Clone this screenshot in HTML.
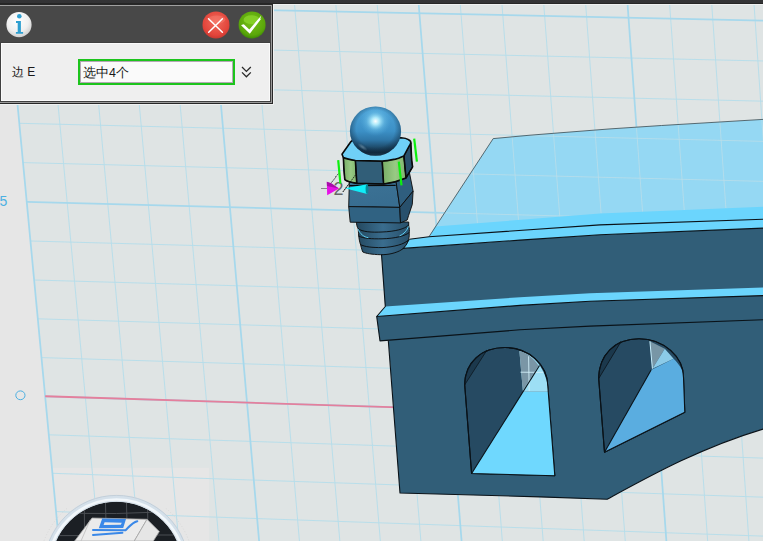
<!DOCTYPE html>
<html><head><meta charset="utf-8">
<style>
html,body{margin:0;padding:0;}
body{width:763px;height:541px;overflow:hidden;position:relative;background:#e6e6e6;font-family:"Liberation Sans",sans-serif;}
#scene{position:absolute;left:0;top:0;}
#topbar{position:absolute;left:0;top:0;width:763px;height:4px;background:linear-gradient(#343436 0,#333335 75%,#262626 75%,#262626 100%);}
#dlg{position:absolute;left:0;top:4px;width:273px;height:100px;background:#282828;}
#dlg .tl{position:absolute;left:0;top:1px;width:272px;height:1px;background:#a0a0a0;}
#dlg .vr{position:absolute;left:271px;top:1px;width:1px;height:98px;background:#9a9a9a;}
#dlg .hdr{position:absolute;left:0;top:2px;width:271px;height:36px;background:#484848;border-bottom:1px solid #404040;}
#dlg .f1{position:absolute;left:0;top:39px;width:272px;height:60px;background:#9a9a9a;}
#dlg .f2{position:absolute;left:0;top:39px;width:271px;height:59px;background:#404040;}
#dlg .f3{position:absolute;left:1px;top:39px;width:269px;height:58px;background:#fafafa;}
#dlg .pan{position:absolute;left:2px;top:40px;width:267px;height:56px;background:#efefef;}
.hl{position:absolute;background:#eff1f1;}
.lbl{position:absolute;font-size:12px;color:#1a1a1a;white-space:nowrap;}
#inp{position:absolute;left:78px;top:55px;width:153px;height:22px;border:2px solid #1cc41c;background:#fafafa;box-shadow:inset 0 0 0 1px #b4a8b4;}
</style></head><body>
<svg id="scene" width="763" height="541" viewBox="0 0 763 541">
<defs>
 <linearGradient id="sph" x1="0" x2="0" y1="0" y2="1">
  <stop offset="0" stop-color="#4ea4d8"/><stop offset="0.5" stop-color="#3c90c6"/><stop offset="0.68" stop-color="#2f77a8"/><stop offset="0.84" stop-color="#1d4866"/><stop offset="0.93" stop-color="#142e44"/><stop offset="1" stop-color="#2c4c62"/>
 </linearGradient>
 <radialGradient id="sphh" cx="0.5" cy="0.3" r="0.3">
  <stop offset="0" stop-color="#ffffff" stop-opacity="1"/><stop offset="0.25" stop-color="#b8f2ff" stop-opacity="0.9"/><stop offset="0.6" stop-color="#7fd2f4" stop-opacity="0.35"/><stop offset="1" stop-color="#5ab4e4" stop-opacity="0"/>
 </radialGradient>
 <radialGradient id="refl"><stop offset="0" stop-color="#8aa8bc" stop-opacity="0.55"/><stop offset="1" stop-color="#8aa8bc" stop-opacity="0"/></radialGradient>
 <radialGradient id="sphe" cx="0.5" cy="0.45" r="0.52">
  <stop offset="0.72" stop-color="#0a1e30" stop-opacity="0"/><stop offset="1" stop-color="#0a1e30" stop-opacity="0.45"/>
 </radialGradient>
 <linearGradient id="thr" x1="0" x2="1" y1="0" y2="0"><stop offset="0" stop-color="#24485f"/><stop offset="0.5" stop-color="#3a6d8e"/><stop offset="1" stop-color="#284f69"/></linearGradient>
 <linearGradient id="blk" x1="0" x2="0.3" y1="0" y2="1"><stop offset="0" stop-color="#3c7396"/><stop offset="1" stop-color="#386d90"/></linearGradient>
 <linearGradient id="grn" x1="0" x2="1" y1="0" y2="0"><stop offset="0" stop-color="#78ad66"/><stop offset="0.55" stop-color="#98ca84"/><stop offset="1" stop-color="#7fb46e"/></linearGradient>
 <clipPath id="topclip"><polygon points="493.2,138.6 530,135.2 560,132.8 610,128.9 661.5,125.5 763,119.4 763,206.8 600,213.6 435.3,226.6"/></clipPath>
</defs>
<polygon points="66.9,626.0 839.5,655.1 794.8,-19.3 4.3,-35.1" fill="#dfe4e4"/>
<rect x="24" y="467.8" width="185.2" height="80" fill="#e6e6e6"/>
<g stroke="#b6ddea" stroke-width="0.95"><line x1="106.8" y1="627.5" x2="45.1" y2="-34.3"/><line x1="146.8" y1="629.0" x2="86.0" y2="-33.5"/><line x1="186.8" y1="630.5" x2="126.9" y2="-32.7"/><line x1="227.0" y1="632.0" x2="168.0" y2="-31.9"/><line x1="307.5" y1="635.0" x2="250.4" y2="-30.2"/><line x1="347.9" y1="636.6" x2="291.7" y2="-29.4"/><line x1="388.4" y1="638.1" x2="333.1" y2="-28.6"/><line x1="428.9" y1="639.6" x2="374.6" y2="-27.7"/><line x1="510.3" y1="642.7" x2="457.9" y2="-26.1"/><line x1="551.1" y1="644.2" x2="499.7" y2="-25.2"/><line x1="592.1" y1="645.8" x2="541.6" y2="-24.4"/><line x1="633.1" y1="647.3" x2="583.6" y2="-23.6"/><line x1="715.4" y1="650.4" x2="667.8" y2="-21.9"/><line x1="756.6" y1="652.0" x2="710.0" y2="-21.0"/><line x1="798.0" y1="653.5" x2="752.4" y2="-20.2"/><line x1="839.5" y1="655.1" x2="794.8" y2="-19.3"/><line x1="66.9" y1="626.0" x2="839.5" y2="655.1"/><line x1="59.7" y1="549.8" x2="834.3" y2="577.5"/><line x1="56.1" y1="511.6" x2="831.7" y2="538.5"/><line x1="52.5" y1="473.3" x2="829.2" y2="499.4"/><line x1="48.8" y1="434.8" x2="826.6" y2="460.2"/><line x1="41.5" y1="357.6" x2="821.4" y2="381.4"/><line x1="37.8" y1="318.8" x2="818.7" y2="341.9"/><line x1="34.2" y1="280.0" x2="816.1" y2="302.2"/><line x1="30.5" y1="241.0" x2="813.5" y2="262.4"/><line x1="23.0" y1="162.6" x2="808.2" y2="182.5"/><line x1="19.3" y1="123.3" x2="805.5" y2="142.4"/><line x1="15.6" y1="83.9" x2="802.9" y2="102.1"/><line x1="11.8" y1="44.3" x2="800.2" y2="61.8"/><line x1="4.3" y1="-35.1" x2="794.8" y2="-19.3"/></g>
<g stroke="#a6d8ec" stroke-width="1.75"><line x1="66.9" y1="626.0" x2="4.3" y2="-35.1"/><line x1="267.2" y1="633.5" x2="209.1" y2="-31.0"/><line x1="469.6" y1="641.1" x2="416.2" y2="-26.9"/><line x1="674.2" y1="648.9" x2="625.6" y2="-22.7"/><line x1="63.3" y1="588.0" x2="836.9" y2="616.3"/><line x1="45.2" y1="396.3" x2="824.0" y2="420.9"/><line x1="26.8" y1="201.9" x2="810.8" y2="222.5"/><line x1="8.1" y1="4.6" x2="797.5" y2="21.3"/></g>
<line x1="45.2" y1="396.3" x2="430.5" y2="408.4" stroke="#e57f9c" stroke-width="1.9"/>
<!-- labels -->
<text x="-0.6" y="206" font-family="Liberation Sans" font-size="14" fill="#4cb0e2">5</text>
<ellipse cx="20.4" cy="395.3" rx="4.6" ry="4.4" fill="none" stroke="#4cb0e2" stroke-width="1"/>

<!-- BIG BODY -->
<polygon points="493.2,138.6 530,135.2 560,132.8 610,128.9 661.5,125.5 763,119.4 763,219.2 600,224.9 429,236.7" fill="#95d8f3"/>
<g clip-path="url(#topclip)"><g stroke="#bcdee8" stroke-width="0.75"><line x1="106.8" y1="627.5" x2="45.1" y2="-34.3"/><line x1="146.8" y1="629.0" x2="86.0" y2="-33.5"/><line x1="186.8" y1="630.5" x2="126.9" y2="-32.7"/><line x1="227.0" y1="632.0" x2="168.0" y2="-31.9"/><line x1="307.5" y1="635.0" x2="250.4" y2="-30.2"/><line x1="347.9" y1="636.6" x2="291.7" y2="-29.4"/><line x1="388.4" y1="638.1" x2="333.1" y2="-28.6"/><line x1="428.9" y1="639.6" x2="374.6" y2="-27.7"/><line x1="510.3" y1="642.7" x2="457.9" y2="-26.1"/><line x1="551.1" y1="644.2" x2="499.7" y2="-25.2"/><line x1="592.1" y1="645.8" x2="541.6" y2="-24.4"/><line x1="633.1" y1="647.3" x2="583.6" y2="-23.6"/><line x1="715.4" y1="650.4" x2="667.8" y2="-21.9"/><line x1="756.6" y1="652.0" x2="710.0" y2="-21.0"/><line x1="798.0" y1="653.5" x2="752.4" y2="-20.2"/><line x1="839.5" y1="655.1" x2="794.8" y2="-19.3"/><line x1="66.9" y1="626.0" x2="839.5" y2="655.1"/><line x1="59.7" y1="549.8" x2="834.3" y2="577.5"/><line x1="56.1" y1="511.6" x2="831.7" y2="538.5"/><line x1="52.5" y1="473.3" x2="829.2" y2="499.4"/><line x1="48.8" y1="434.8" x2="826.6" y2="460.2"/><line x1="41.5" y1="357.6" x2="821.4" y2="381.4"/><line x1="37.8" y1="318.8" x2="818.7" y2="341.9"/><line x1="34.2" y1="280.0" x2="816.1" y2="302.2"/><line x1="30.5" y1="241.0" x2="813.5" y2="262.4"/><line x1="23.0" y1="162.6" x2="808.2" y2="182.5"/><line x1="19.3" y1="123.3" x2="805.5" y2="142.4"/><line x1="15.6" y1="83.9" x2="802.9" y2="102.1"/><line x1="11.8" y1="44.3" x2="800.2" y2="61.8"/><line x1="4.3" y1="-35.1" x2="794.8" y2="-19.3"/><line x1="66.9" y1="626.0" x2="4.3" y2="-35.1"/><line x1="267.2" y1="633.5" x2="209.1" y2="-31.0"/><line x1="469.6" y1="641.1" x2="416.2" y2="-26.9"/><line x1="674.2" y1="648.9" x2="625.6" y2="-22.7"/><line x1="63.3" y1="588.0" x2="836.9" y2="616.3"/><line x1="45.2" y1="396.3" x2="824.0" y2="420.9"/><line x1="26.8" y1="201.9" x2="810.8" y2="222.5"/><line x1="8.1" y1="4.6" x2="797.5" y2="21.3"/></g></g>
<polygon points="435.3,226.6 600,213.6 763,206.8 763,219.2 600,224.9 429,236.7" fill="#6bd5fd"/>
<polyline points="429,236.7 493.2,138.6 530,135.2 560,132.8 610,128.9 661.5,125.5 763,119.4" fill="none" stroke="#3a4a50" stroke-width="0.8"/>
<polygon points="381.5,254.4 403.1,248.4 520,240.1 600,234.8 763,228.1 763,290 590,295.5 520,299.2 385.3,308.5" fill="#315e78"/>
<polygon points="409.4,239.3 429,236.7 600,224.9 763,219.2 763,228.1 600,234.8 520,240.1 403.1,248.4" fill="#6bd5fd"/>
<path d="M388.3,339 L520,328 L590,324 L763,317.8 L763,429.1 C700,448 650,476 607.2,499.3 L540,496.9 L400,493 Z" fill="#315e78"/>
<polygon points="385.3,306.5 520,297.2 590,293.3 763,287.6 763,295.6 590,301.2 520,305.4 376.7,316.5" fill="#6bd5fd"/>
<polygon points="376.7,316.5 520,305.4 590,301.2 763,295.6 763,319.8 590,326.1 520,329.8 380,340.9" fill="#315e78"/>
<g stroke="#0a1218" stroke-width="1.1" stroke-linejoin="round" fill="none">
 <polyline points="409.4,239.3 429,236.7 600,224.9 763,219.2"/>
 <polyline points="409.4,239.3 403.1,248.4 520,240.1 600,234.8 763,228.1"/>
 <polyline points="403.1,248.4 381.5,254.4 385.3,306.5 376.7,316.5 520,305.4 590,301.2 763,295.6"/>
 <polyline points="376.7,316.5 380,340.9 520,329.8 590,326.1 763,319.8"/>
 <path d="M388.3,340.5 L400,493 L540,496.9 L607.2,499.3 C650,476 700,448 763,429.1"/>
</g>
<!-- arch 1 -->
<g stroke="#0a1218" stroke-width="1.1" stroke-linejoin="round">
 <path d="M464.7,384.9 C464.7,362 482,347.5 505,347.5 C528,347.5 547.8,364 547.8,386.3 L554.8,475.8 L471.6,473.5 Z" fill="#264a62"/>
 <path d="M464.7,384.9 C464.7,370 474,357 486.9,350.2 Z" fill="#1b384c" stroke-width="0.7"/>
 <polygon points="471.6,473.5 522.96,391.8 548.4,391.8 554.8,475.8" fill="#6fd8fe" stroke="none"/>
 <path d="M519.4,351.1 C532,354 544,365 547.8,386.3 L548.3,391.8 L522.96,391.8 Z" fill="#9ddff5" stroke="none"/>
 <path d="M519.4,351.1 C527,353 533,357.5 538.6,365.8 L522.8,390.6 Z" fill="#7a96a6" stroke="none"/>
 <line x1="528.6" y1="356.3" x2="529.2" y2="391" stroke="#d0eef8" stroke-width="0.9"/><line x1="520.5" y1="372.2" x2="543.2" y2="372.4" stroke="#d0eef8" stroke-width="0.9"/>
 <line x1="471.6" y1="473.5" x2="539.5" y2="365.5"/>
 <path d="M464.7,384.9 C464.7,362 482,347.5 505,347.5 C528,347.5 547.8,364 547.8,386.3 L554.8,475.8 L471.6,473.5 Z" fill="none"/>
</g>
<!-- arch 2 -->
<g stroke="#0a1218" stroke-width="1.1" stroke-linejoin="round">
 <path d="M598.7,378.6 C598.7,355 615,338.7 639,338.7 C664,338.7 683.5,357 683.5,377.4 L684.8,412.3 L604.5,452.2 Z" fill="#264a62"/>
 <path d="M598.7,378.6 C598.7,362 607,349 621,341.6 Z" fill="#1b384c" stroke-width="0.8"/>
 <path d="M604.5,452.2 L651.1,369.9 L673.6,358.7 C680,365 683.5,371 683.5,377.4 L684.8,412.3 Z" fill="#5aade0" stroke="none"/>
 <polygon points="649.9,341.2 664.8,348.7 652.4,368.7" fill="#7896a6" stroke="none"/>
 <polygon points="664.8,348.7 673.6,358.7 652.4,368.7" fill="#8ccbe8" stroke="none"/>
 <line x1="649.9" y1="341.2" x2="652.4" y2="368.7" stroke="#c8f0ff" stroke-width="1"/>
 <line x1="604.5" y1="452.2" x2="651.1" y2="369.9"/>
 <path d="M598.7,378.6 C598.7,355 615,338.7 639,338.7 C664,338.7 683.5,357 683.5,377.4 L684.8,412.3 L604.5,452.2 Z" fill="none"/>
</g>

<!-- NUT COLUMN -->
<g stroke="#0a0a0a" stroke-width="0.9" stroke-linejoin="round">
 <!-- threads -->
 <path d="M356.4,222 L408.7,222 L408.7,226 C409.5,228 409.6,231 409.2,233 C409.5,236 409,239 407.8,241 C407.5,243 406.5,245 404,247.5 C402,250 398,252 392,253.5 C388,254.5 384,254.7 380.3,254.7 C372,254.5 366,253.5 362.8,252 C361.5,249 361,246 360.5,244.5 C359.5,242 359,238 358.7,236 C358.5,233 358.3,230 358.3,229 C357,227 356.5,224.5 356.4,222 Z" fill="url(#thr)"/>
 <path d="M358,228.5 C362,232 372,232.5 382,232 C395,231.5 405,229 408.7,225" fill="none"/>
 <path d="M358.7,236 C363,238.5 372,239 382,238.8 C395,238.5 405,236 409.2,232.5" fill="none"/>
 <path d="M360.1,244.4 C365,247 372,247.6 382,247.6 C395,247 404,244 407.8,240.5" fill="none"/>
 <path d="M358,229 C360,234 364,237 368.3,237.7" fill="none" stroke="#5fd0f4" stroke-width="1"/>
 <path d="M399.5,235.9 C404,234 407.5,230 408.3,226.3" fill="none" stroke="#5fd0f4" stroke-width="1"/>
 <!-- block front -->
 <polygon points="349.4,179 395.7,179 399.8,207.4 348.7,206.6" fill="url(#blk)"/>
 <polygon points="348.7,206.6 399.8,207.4 400.5,222.9 350.2,222.2" fill="#306282"/>
 <polygon points="395.7,179 409.3,172 413.1,191.1 399.8,207.4" fill="#2f5e7e"/>
 <polygon points="399.8,207.4 413.1,191.1 412.3,204.4 408.6,215.5 407.2,220 400.5,222.9" fill="#28506c"/>
 <path d="M349.4,185.6 L395.7,185.3" fill="none" stroke-width="1.2"/>
 <!-- nut front faces -->
 <path d="M343.4,157.6 L355.4,160.5 L356.8,183.4 C351,182.5 347,181.5 344.8,179.7 C344,172 343.5,163 343.4,157.6 Z" fill="url(#grn)"/>
 <path d="M355.4,160.5 L382.2,161.1 L383.6,184 L356.8,183.4 Z" fill="#315e78"/>
 <path d="M382.2,161.1 C390,160.8 398,158.5 403.9,155.9 L406,178 C399,181 392,183 383.6,184 Z" fill="url(#grn)"/>
 <path d="M403.9,155.9 L409.4,145.7 C410.5,144.2 410.8,143 410.8,142.8 L411.7,160.5 L412.6,166.9 L406,178 Z" fill="#29506b"/>
 <!-- nut top face -->
 <path d="M342,154.3 L350.8,141.8 C352.5,139.8 355,139.2 358,139.1 L401.1,137.8 C404,138 406.8,138.6 408.5,139.7 C410.2,140.6 411,141.5 410.8,142.8 C410.5,144 410,145 409.4,145.7 L403.9,155.9 C400,157.6 398,158.5 395.5,159.1 C392,159.8 386,161 382.2,161.1 L355.4,160.5 C350,159.8 346,158.8 343.4,157.6 Z" fill="#6fd0f7" stroke-width="1.6"/>
 <path d="M343.4,157.6 C343.5,163 344,172 344.8,179.7 C347,181.5 351,182.5 356.8,183.4 L383.6,184 C392,183 399,181 406,178 L412.6,166.9 L411.7,160.5 L410.8,142.8 M355.4,160.5 L356.8,183.4 M382.2,161.1 L383.6,184 M403.9,155.9 L406,178" fill="none" stroke-width="1.6"/>
 <path d="M355.4,175.1 L343,191.8 M339.7,172.3 L335.5,177" fill="none" stroke="#151515" stroke-width="0.9" stroke-dasharray="1.6 0.9"/>
</g>
<!-- sphere -->
<ellipse cx="375.5" cy="131.1" rx="25.6" ry="24.7" fill="url(#sph)"/>
<ellipse cx="375.5" cy="131.1" rx="25.6" ry="24.7" fill="url(#sphh)"/>
<ellipse cx="375.5" cy="131.1" rx="25.6" ry="24.7" fill="url(#sphe)"/>
<ellipse cx="362.5" cy="147" rx="6" ry="2.2" transform="rotate(35 362.5 147)" fill="url(#refl)"/>
<text x="333.6" y="194.7" font-family="Liberation Sans" font-size="18" fill="#666666">2</text>
<!-- green edge markers -->
<g stroke="#0ef00e" stroke-width="2.2">
 <line x1="338.2" y1="160.1" x2="340.4" y2="183.7"/>
 <line x1="398.8" y1="161.7" x2="401.5" y2="185.4"/>
 <line x1="414.2" y1="138.6" x2="416.9" y2="161.7"/>
</g>
<!-- axis triad -->
<g>
 <line x1="321" y1="188.5" x2="327" y2="188.5" stroke="#707070" stroke-width="0.8"/>
 <polygon points="326.8,181.8 327.2,195.2 339,188.5" fill="#e612e6"/>
 <polygon points="326.8,181.8 331,183 339,188.5 327,186" fill="#a80ea8"/>
 <polygon points="344.9,188.2 367.2,184.2 367.2,194.1" fill="#10eef8"/>
 <ellipse cx="367" cy="189.1" rx="1.4" ry="4.9" fill="#0a8a9a"/>
 <path d="M331.5,182.5 L336,177 M343,191.8 L349,183.8" stroke="#151515" stroke-width="0.9" stroke-dasharray="1.6 0.9"/>
</g>

<!-- VIEW CUBE widget -->
<g>
 <clipPath id="dashclip"><rect x="0" y="508" width="300" height="40"/></clipPath>
 <circle cx="116.5" cy="567.7" r="77.3" fill="none" stroke="#b8b8b8" stroke-width="0.6" stroke-dasharray="1 2" opacity="0.5" clip-path="url(#dashclip)"/>
 <clipPath id="cubeclip"><circle cx="116.5" cy="567.7" r="66"/></clipPath>
 <circle cx="116.5" cy="567.7" r="66" fill="#1b1f24"/>
 <g clip-path="url(#cubeclip)" stroke="#4a4e53" stroke-width="1" fill="none">
  <path d="M105.4,500 L106.5,541 M126.4,500 L127.5,541 M84.3,505 L84.6,541 M147.6,505 L148,541"/>
  <path d="M50,512 Q116.5,516 183,510"/>
  <path d="M40,535.6 L100,535.6 M140,535 L190,535"/>
 </g>
 <polygon points="92,518 147,519.3 134.3,541 74.7,541" fill="#ebebeb" stroke="#a8a8a8" stroke-width="0.8"/>
 <line x1="90" y1="520.3" x2="81" y2="541" stroke="#bcbcbc" stroke-width="0.8"/>
 <polygon points="147,519.3 159.3,531.6 153.3,541 134.3,541" fill="#e6e6e6" stroke="#a8a8a8" stroke-width="0.8"/>
 <g fill="none" stroke="#3a88e8" stroke-linejoin="round" stroke-linecap="round">
  <path d="M102.2,518.4 L126,518.9 L123.2,528 L98.8,528.3 Z M104.6,522.3 L121.8,522.7 L120.8,524.7 L103.6,525 Z" fill="#3a88e8" fill-rule="evenodd" stroke="none"/>
  <path d="M93,530.1 L125.6,530.2 C129,527 132,522.5 137.3,521.2" stroke-width="2"/>
  <path d="M93,535 L122.4,532.8" stroke-width="2"/>
 </g>
 <circle cx="116.5" cy="567.7" r="69.25" fill="none" stroke="#d4e0ea" stroke-width="6.7"/>
 <circle cx="116.5" cy="567.7" r="68.2" fill="none" stroke="#f2f7fb" stroke-width="2.6"/>
 <circle cx="116.5" cy="567.7" r="72.3" fill="none" stroke="#bfcad4" stroke-width="0.8"/>
</g>
</svg>

<div id="topbar"></div>
<div class="hl" style="left:273px;top:4px;width:490px;height:1px"></div><div class="hl" style="left:273px;top:4px;width:1px;height:101px"></div><div class="hl" style="left:0;top:104px;width:274px;height:1px;background:#f0f2f2"></div>
<div id="dlg">
 <div class="tl"></div>
 <div class="hdr"></div><div class="vr"></div>
 <div class="f1"></div><div class="f2"></div><div class="f3"></div><div class="pan"></div>
 <svg style="position:absolute;left:0;top:1px" width="273" height="99">
  <defs>
   <radialGradient id="gi" cx="0.45" cy="0.35" r="0.7"><stop offset="0" stop-color="#ffffff"/><stop offset="0.6" stop-color="#f0f0f0"/><stop offset="1" stop-color="#c8c8c8"/></radialGradient>
   <radialGradient id="gr" cx="0.5" cy="0.4" r="0.6"><stop offset="0" stop-color="#f06a5c"/><stop offset="0.8" stop-color="#e2443a"/><stop offset="1" stop-color="#c83a32"/></radialGradient>
   <radialGradient id="gg" cx="0.5" cy="0.4" r="0.6"><stop offset="0" stop-color="#78c01a"/><stop offset="0.8" stop-color="#5aa60a"/><stop offset="1" stop-color="#3f8a06"/></radialGradient>
  </defs>
  <circle cx="19" cy="19.7" r="12.6" fill="url(#gi)"/>
  <circle cx="19.3" cy="11.2" r="2.3" fill="#2f9fd0"/>
  <path d="M16 15.9 H20.9 V26.9 H23.1 V28.8 H15.9 V26.9 H17.7 V18.1 H16 Z" fill="#2f9fd0"/>
  <circle cx="216" cy="19.9" r="13.5" fill="url(#gr)"/>
  <ellipse cx="216.7" cy="14.5" rx="8.7" ry="4.1" fill="#ff9080" opacity="0.35"/>
  <path d="M208.5 13.8 L222.4 27.2 M222.4 13.8 L208.7 27.2" stroke="#ffffff" stroke-width="1.5" stroke-linecap="round"/>
  <circle cx="252.1" cy="19.9" r="13.5" fill="url(#gg)"/>
  <ellipse cx="251.6" cy="14.7" rx="8" ry="4.4" fill="#8ad42a" opacity="0.8"/>
  <path d="M241.3 20.1 L243.8 19.2 L249.3 24.5 L261.1 10.8 L260.2 14.2 L261.4 13.5 L249.8 28.7 L241.3 20.6 Z" fill="#ffffff"/>
 </svg>
 <div class="lbl" style="left:12px;top:60px;">边 E</div>
 <div id="inp"></div>
 <div class="lbl" style="left:83px;top:61px;font-size:12.5px">选中4个</div>
 <svg style="position:absolute;left:241px;top:62px" width="12" height="13"><path d="M1 1 L5.4 5.4 L9.8 1 M1 6.4 L5.4 10.8 L9.8 6.4" fill="none" stroke="#2a2a2a" stroke-width="1.3"/></svg>
</div>
</body></html>
